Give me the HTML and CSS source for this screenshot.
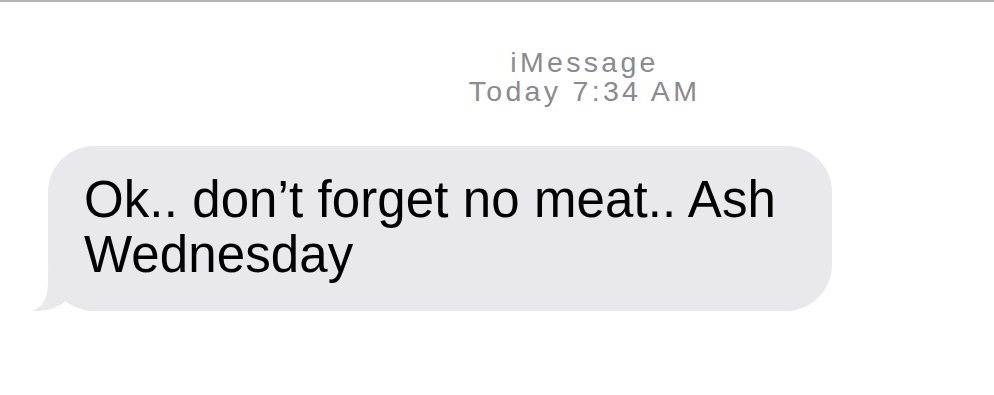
FILE: index.html
```html
<!DOCTYPE html>
<html>
<head>
  <meta charset="UTF-8">
  <title>Messages</title>
  <link rel="stylesheet" href="styles.css">
</head>
<body>
  <div class="thread">
    <!-- Service and time stamp -->
    <div class="thread-header">
      <div class="service">iMessage</div>
      <div class="time">Today <span class="time-value">7:34 AM</span></div>
    </div>

    <!-- Incoming message -->
    <div class="message-row">
      <div class="bubble incoming">
        <p class="bubble-text">Ok.. don’t forget no meat.. Ash Wednesday</p>
        <svg class="tail" width="45" height="41" viewBox="0 0 45 41" aria-hidden="true">
          <path d="M16 0 L16 12 C16 28 10 38 0 41 Q22 42 35 30 L45 20 L45 0 Z" fill="#e9e9eb"/>
        </svg>
      </div>
    </div>
  </div>
</body>
</html>
```

FILE: styles.css
```css
:root {
  --background: #ffffff;
  --foreground: #000000;
  --muted-foreground: #8a8a8f;
  --bubble: #e9e9eb;
  --divider: #b6b6b6;
}

body {
  margin: 0;
  font-family: "Liberation Sans", Arial, Helvetica, sans-serif;
  color: var(--foreground);
  background-color: var(--background);
}

.thread {
  border-top: 2px solid var(--divider);
  height: 393px;
}

/* Header */
.thread-header {
  margin-top: 46px;
  padding-left: 175px;
  text-align: center;
  color: var(--muted-foreground);
  font-size: 28.5px;
  line-height: 28.5px;
  letter-spacing: 3.3px;
}

/* Bubbles */
.message-row {
  display: flex;
  margin-top: 41px;
  padding-left: 48px;
}

.bubble {
  position: relative;
  box-sizing: border-box;
  width: 784px;
  padding: 26px 37px 29px 36px;
  border-radius: 46px;
  background-color: var(--bubble);
}

.bubble-text {
  margin: 0;
  font-size: 51px;
  line-height: 55px;
  letter-spacing: 0.1px;
  position: relative;
  z-index: 1;
}

.tail {
  position: absolute;
  left: -16px;
  bottom: 0;
  display: block;
}
```
